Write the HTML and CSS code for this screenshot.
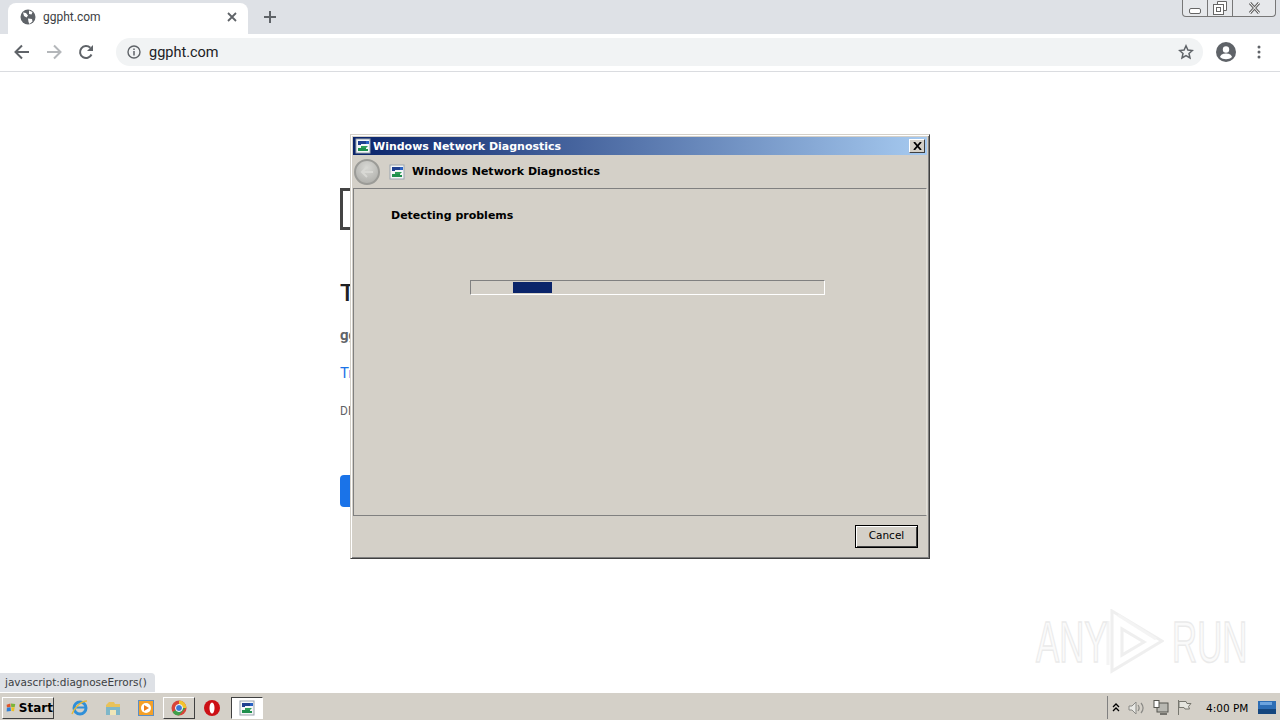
FILE: index.html
```html
<!DOCTYPE html>
<html lang="en">
<head>
<meta charset="UTF-8">
<meta name="viewport" content="width=device-width, initial-scale=1.0">
<title>ggpht.com</title>
<link rel="stylesheet" href="styles.css">
</head>
<body>

<svg class="defs" width="0" height="0">
  <symbol id="netdiag" viewBox="0 0 16 16">
    <rect x="1" y="1" width="14" height="14" fill="#f4f6f8" stroke="#9aa3ad"/>
    <path d="M3 3h10v3H6v1H3z" fill="#1f3f8f"/>
    <path d="M6 8h7l-2 2h-5z" fill="#2f9e58"/>
    <path d="M3 10h8v1l2 0v2H3z" fill="#1f8f4d"/>
    <rect x="11" y="3" width="3" height="3" fill="#2a62c4"/>
  </symbol>
</svg>

<div class="browser">
  <div class="tabstrip">
    <div class="tab">
      <svg class="tab-icon" width="16" height="16" viewBox="0 0 16 16">
        <circle cx="8" cy="8" r="7.5" fill="#5f6368"/>
        <path d="M3 3.5l3 .5 2 2.5-1.500 2-2.500-1.500zM9 1.500l3.500 1.500-1 2.500-2.500-.5zM8 9.500l4 .5.500 2.500-3 2.500-1-2z" fill="#fff"/>
      </svg>
      <span class="tab-title">ggpht.com</span>
      <svg class="tab-close" width="10" height="10" viewBox="0 0 10 10">
        <path d="M1 1l8 8M9 1l-8 8" stroke="#5f6368" stroke-width="1.800"/>
      </svg>
    </div>
    <svg class="new-tab" width="12" height="12" viewBox="0 0 12 12">
      <path d="M6 0v12M0 6h12" stroke="#5f6368" stroke-width="2"/>
    </svg>
    <div class="win-controls">
      <div class="win-btn min"><svg width="12" height="6" viewBox="0 0 12 6"><rect x="0.500" y="0.500" width="11" height="5" rx="1.500" fill="#fff" stroke="#666"/></svg></div>
      <div class="win-btn restore"><svg width="14" height="14" viewBox="0 0 14 14"><path d="M4.500 3V.5h9v9H11" fill="#fff" stroke="#666"/><rect x="0.500" y="3.500" width="10" height="10" fill="#fff" stroke="#666"/><rect x="3.500" y="6.500" width="4" height="4" fill="none" stroke="#666"/></svg></div>
      <div class="win-btn close"><svg width="13" height="12" viewBox="0 0 13 12"><path d="M2 1l9 10M11 1L2 11" stroke="#666" stroke-width="3"/><path d="M2 1l9 10M11 1L2 11" stroke="#fff" stroke-width="1"/></svg></div>
    </div>
  </div>

  <div class="toolbar">
    <svg class="nav-icon" width="16" height="16" viewBox="0 0 16 16"><path d="M15 8H2M8 1.500L1.500 8 8 14.500" fill="none" stroke="#5f6368" stroke-width="2"/></svg>
    <svg class="nav-icon" width="16" height="16" viewBox="0 0 16 16"><path d="M1 8h13M8 1.500L14.500 8 8 14.500" fill="none" stroke="#b4b7ba" stroke-width="2"/></svg>
    <svg class="nav-icon" width="16" height="16" viewBox="0 0 16 16"><path d="M13.500 10.500A6 6 0 1 1 12.300 3.800" fill="none" stroke="#5f6368" stroke-width="2"/><path d="M15 1v6H9z" fill="#5f6368"/></svg>
    <div class="omnibox">
      <svg class="info-icon" width="14" height="14" viewBox="0 0 14 14"><circle cx="7" cy="7" r="6" fill="none" stroke="#5f6368" stroke-width="1.400"/><path d="M7 6v4.500M7 3.500v1.500" stroke="#5f6368" stroke-width="1.500"/></svg>
      <span class="url">ggpht.com</span>
      <svg class="star" width="16" height="16" viewBox="0 0 16 16"><path d="M8 1.800l1.900 4.200 4.500.5-3.400 3 1 4.500L8 11.700 4 14l1-4.500-3.400-3 4.500-.5z" fill="none" stroke="#5f6368" stroke-width="1.500"/></svg>
    </div>
    <svg class="avatar" width="20" height="20" viewBox="0 0 20 20"><circle cx="10" cy="10" r="10" fill="#5f6368"/><circle cx="10" cy="7.500" r="3.200" fill="#fff"/><path d="M4 15c1-3 3.500-3.500 6-3.500s5 .5 6 3.500c-3 3-9 3-12 0z" fill="#fff"/></svg>
    <svg class="menu" width="4" height="14" viewBox="0 0 4 14"><circle cx="2" cy="2" r="1.500" fill="#5f6368"/><circle cx="2" cy="7" r="1.500" fill="#5f6368"/><circle cx="2" cy="12" r="1.500" fill="#5f6368"/></svg>
  </div>

  <div class="page">
    <div class="error-icon"></div>
    <h1 class="error-title">This site can't be reached</h1>
    <p class="error-host">ggpht.com's server IP address could not be found.</p>
    <a class="error-link" href="#">Try running Windows Network Diagnostics.</a>
    <div class="error-code">DNS_PROBE_FINISHED_NXDOMAIN</div>
    <div class="reload-btn">Reload</div>

    <div class="dialog">
      <div class="dialog-title">
        <svg width="16" height="16"><use href="#netdiag"/></svg>
        <span class="dialog-title-text">Windows Network Diagnostics</span>
        <div class="dialog-close">
          <svg width="9" height="8" viewBox="0 0 9 8"><path d="M1 0l7 8M8 0L1 8" stroke="#000" stroke-width="1.800"/></svg>
        </div>
      </div>
      <div class="dialog-head">
        <div class="back-btn">
          <svg width="14" height="12" viewBox="0 0 14 12"><path d="M13 6H3M7 1L2 6l5 5" fill="none" stroke="#d8d8d4" stroke-width="2"/></svg>
        </div>
        <svg width="16" height="16"><use href="#netdiag"/></svg>
        <span class="dialog-head-text">Windows Network Diagnostics</span>
      </div>
      <div class="dialog-panel">
        <div class="status">Detecting problems</div>
        <div class="progress"><div class="progress-chunk"></div></div>
      </div>
      <div class="dialog-foot">
        <div class="cancel-btn">Cancel</div>
      </div>
    </div>

    <div class="watermark">
      <span class="wm-text">ANY</span>
      <svg class="wm-logo" width="58" height="66" viewBox="0 0 58 66">
        <path d="M6 2v60l50-30zM16 20v26l22-13z" fill="none" stroke="#ececec" stroke-width="3"/>
        <path d="M2 12v44M12 6l38 24" fill="none" stroke="#f2f2f2" stroke-width="3"/>
      </svg>
      <span class="wm-text">RUN</span>
    </div>

    <div class="status-bubble">javascript:diagnoseErrors()</div>
  </div>

  <div class="taskbar">
    <div class="start-btn">
      <svg width="16" height="15" viewBox="0 0 16 15">
        <path d="M1 3l6-2 .5 5.500-6 1z" fill="#e0562a"/>
        <path d="M8 1l7 1-1 5-5.500-.5z" fill="#7cb53a"/>
        <path d="M1.500 8l6-1 .5 6-7 1z" fill="#2f7fd6"/>
        <path d="M8.500 7l5.500.5-1 6-4-.5z" fill="#f0c020"/>
      </svg>
      <span>Start</span>
    </div>
    <div class="quick">
      <svg width="18" height="18" viewBox="0 0 18 18"><circle cx="9" cy="9" r="6" fill="none" stroke="#2f8fd8" stroke-width="3"/><path d="M4 8.500h11" stroke="#2f8fd8" stroke-width="2"/><path d="M1 15C3 9 10 2 16 2" fill="none" stroke="#e6b93a" stroke-width="1.500"/></svg>
    </div>
    <div class="quick">
      <svg width="16" height="16" viewBox="0 0 16 16"><path d="M1 5l3-3h5l1 2h5v3H1z" fill="#e8c25a"/><rect x="1" y="7" width="14" height="8" fill="#7fb7c9"/><rect x="5" y="10" width="6" height="5" fill="#f0e6b8"/></svg>
    </div>
    <div class="quick">
      <svg width="16" height="16" viewBox="0 0 16 16"><rect x="0.500" y="0.500" width="15" height="15" fill="#f4a028" stroke="#5a8fc8"/><circle cx="8" cy="8" r="5" fill="#fff"/><path d="M6 5l5 3-5 3z" fill="#ee7f1a"/></svg>
    </div>
    <div class="quick quick-raised">
      <svg width="16" height="16" viewBox="0 0 16 16"><circle cx="8" cy="8" r="7.500" fill="#d8453a"/><path d="M8 8L1.500 12A7.500 7.500 0 0 0 8 15.500L14.500 8z" fill="#3fa04a"/><path d="M8 .5A7.500 7.500 0 0 1 15.500 8H8z" fill="#f3c32c"/><circle cx="8" cy="8" r="3.500" fill="#3b78d8" stroke="#fff"/></svg>
    </div>
    <div class="quick">
      <svg width="16" height="16" viewBox="0 0 16 16"><circle cx="8" cy="8" r="8" fill="#cc1016"/><ellipse cx="8" cy="8" rx="2.500" ry="5.500" fill="#fff"/></svg>
    </div>
    <div class="quick quick-active">
      <svg width="16" height="16"><use href="#netdiag"/></svg>
    </div>
    <div class="tray">
      <svg width="8" height="9" viewBox="0 0 8 9"><path d="M1 4l3-3 3 3M1 8l3-3 3 3" fill="none" stroke="#000" stroke-width="1.300"/></svg>
      <svg width="17" height="14" viewBox="0 0 17 14"><path d="M1 5h3l4-4v12L4 9H1z" fill="#e8e8e4" stroke="#8a8a86"/><path d="M10 4c1.500 2 1.500 4 0 6M13 2c2.500 3 2.500 7 0 10" fill="none" stroke="#8a8a86" stroke-width="1.200"/></svg>
      <svg width="16" height="15" viewBox="0 0 16 15"><rect x="4" y="3" width="11" height="9" fill="#b8b8b2" stroke="#55554f"/><rect x="1" y="0.500" width="5" height="7" fill="#fff" stroke="#55554f"/><path d="M7 14h7" stroke="#55554f" stroke-width="1.500"/></svg>
      <svg width="15" height="15" viewBox="0 0 15 15"><path d="M1.500 0v15" stroke="#77776f"/><path d="M2 1.500h7l1 2h4l-2.500 3 1 2.500H8l-1-1.500H2z" fill="#e6e6e0" stroke="#77776f"/></svg>
      <span class="clock">4:00 PM</span>
      <svg class="show-desktop" width="18" height="13" viewBox="0 0 18 13"><rect width="18" height="11" fill="#2c6db5"/><rect y="8" width="18" height="5" fill="#14467e"/><rect x="2" y="1" width="12" height="3" fill="#6ba3de"/></svg>
    </div>
  </div>
</div>

</body>
</html>
```

FILE: styles.css
```css
html, body {
  margin: 0;
  height: 100%;
  overflow: hidden;
  background: #fff;
}

.defs {
  position: absolute;
}

.browser {
  display: flex;
  flex-direction: column;
  height: 720px;
  font-family: Roboto, "Liberation Sans", sans-serif;
}

/* tab strip */
.tabstrip {
  display: flex;
  align-items: flex-end;
  height: 34px;
  padding-left: 8px;
  background: #dee1e6;
  position: relative;
  flex: none;
}

.tab {
  display: flex;
  align-items: center;
  box-sizing: border-box;
  width: 240px;
  height: 31px;
  padding: 0 11px 3px 12px;
  background: #fff;
  border-radius: 8px 8px 0 0;
}

.tab-title {
  flex: 1;
  margin-left: 7px;
  font-size: 12px;
  color: #3c4043;
}

.new-tab {
  margin: 0 0 11px 16px;
}

.win-controls {
  display: flex;
  position: absolute;
  top: 0;
  right: 4px;
  height: 16px;
  border: 1px solid #777;
  border-top: 0;
  border-radius: 0 0 4px 4px;
  background: #e6e8eb;
}

.win-btn {
  display: flex;
  align-items: center;
  justify-content: center;
  width: 24px;
  height: 16px;
  border-left: 1px solid #777;
}

.win-btn.min {
  border-left: 0;
}

.win-btn.min svg {
  margin-top: 5px;
}

.win-btn.close {
  width: 42px;
}

/* toolbar */
.toolbar {
  display: flex;
  align-items: center;
  box-sizing: border-box;
  height: 38px;
  padding: 0 19px 1px 14px;
  background: #fff;
  border-bottom: 1px solid #dadce0;
  flex: none;
}

.nav-icon {
  margin-right: 16px;
}

.omnibox {
  display: flex;
  align-items: center;
  flex: 1;
  height: 28px;
  margin: 0 13px 0 6px;
  padding: 0 9px 0 11px;
  background: #f1f3f4;
  border-radius: 14px;
}

.url {
  flex: 1;
  margin-left: 8px;
  font-size: 14.500px;
  color: #202124;
}

.avatar {
  margin-right: 21px;
}

/* error page behind the dialog */
.page {
  flex: 1;
  position: relative;
  box-sizing: border-box;
  padding: 116px 0 0 340px;
  background: #fff;
  overflow: hidden;
}

.error-icon {
  box-sizing: border-box;
  width: 48px;
  height: 42px;
  border: 3px solid #444;
}

.error-title {
  margin: 48px 0 0;
  font-size: 24px;
  line-height: 30px;
  font-weight: 500;
  color: #202124;
}

.error-host {
  margin: 17px 0 0;
  font-size: 15px;
  line-height: 20px;
  font-weight: 700;
  color: #5f6368;
}

.error-link {
  display: block;
  margin-top: 18px;
  font-size: 15px;
  line-height: 20px;
  color: #1a73e8;
  text-decoration: none;
}

.error-code {
  margin-top: 20px;
  font-size: 12px;
  line-height: 16px;
  color: #5f6368;
}

.reload-btn {
  box-sizing: border-box;
  width: 80px;
  height: 32px;
  margin-top: 56px;
  padding-top: 8px;
  text-align: center;
  font-size: 13px;
  color: #fff;
  background: #1a73e8;
  border-radius: 4px;
}

/* dialog window */
.dialog {
  display: flex;
  flex-direction: column;
  position: absolute;
  left: 350px;
  top: 62px;
  box-sizing: border-box;
  width: 580px;
  height: 425px;
  background: #d4d0c8;
  border: 1px solid;
  border-color: #d4d0c8 #404040 #404040 #d4d0c8;
  box-shadow: inset 1px 1px 0 #fff, inset -1px -1px 0 #808080;
  padding: 2px;
  font-family: "DejaVu Sans", sans-serif;
  color: #000;
}

.dialog-title {
  display: flex;
  align-items: center;
  flex: none;
  height: 18px;
  padding: 0 2px;
  background: linear-gradient(to right, #0a246a, #a6caf0);
}

.dialog-title-text {
  flex: 1;
  margin-left: 2px;
  font-size: 11px;
  font-weight: 700;
  color: #fff;
}

.dialog-close {
  display: flex;
  align-items: center;
  justify-content: center;
  box-sizing: border-box;
  width: 16px;
  height: 14px;
  background: #d4d0c8;
  border: 1px solid;
  border-color: #fff #404040 #404040 #fff;
}

.dialog-head {
  display: flex;
  align-items: center;
  flex: none;
  box-sizing: border-box;
  height: 33px;
  padding-left: 1px;
}

.back-btn {
  display: flex;
  align-items: center;
  justify-content: center;
  box-sizing: border-box;
  width: 26px;
  height: 26px;
  margin-right: 9px;
  border: 2px solid #9b9b97;
  border-radius: 50%;
  background: radial-gradient(circle at 50% 30%, #d8d8d4, #a9a9a5);
}

.dialog-head-text {
  margin-left: 7px;
  font-size: 11px;
  font-weight: 700;
}

.dialog-panel {
  flex: 1;
  box-sizing: border-box;
  padding: 20px 0 0 37px;
  border: 1px solid;
  border-color: #808080 #e4e2dc #808080 #808080;
}

.status {
  font-size: 11px;
  font-weight: 700;
  line-height: 13px;
}

.progress {
  box-sizing: border-box;
  width: 355px;
  height: 15px;
  margin: 58px 0 0 79px;
  padding-top: 1px;
  border: 1px solid;
  border-color: #808080 #fff #fff #808080;
}

.progress-chunk {
  width: 39px;
  height: 11px;
  margin-left: 42px;
  background: #0a246a;
}

.dialog-foot {
  display: flex;
  justify-content: flex-end;
  flex: none;
  box-sizing: border-box;
  height: 40px;
  padding: 9px 9px 0 0;
}

.cancel-btn {
  box-sizing: border-box;
  width: 63px;
  height: 23px;
  font-family: "DejaVu Sans", sans-serif;
  font-size: 10.500px;
  line-height: 19px;
  text-align: center;
  background: #d4d0c8;
  border: 1px solid #000;
  box-shadow: inset 1px 1px 0 #fff, inset -1px -1px 0 #404040;
}

/* watermark and status bubble float over the page */
.watermark {
  display: flex;
  align-items: center;
  position: absolute;
  left: 1036px;
  top: 536px;
  height: 68px;
  opacity: 0.8;
}

.wm-text {
  display: block;
  width: 70px;
  font-family: "Liberation Sans", sans-serif;
  font-size: 58px;
  line-height: 58px;
  color: #fafafa;
  -webkit-text-stroke: 1.500px #e6e6e6;
  transform: scaleX(0.6);
  transform-origin: left center;
}

.wm-logo {
  margin: 0 8px 0 0;
}

.status-bubble {
  position: absolute;
  left: 0;
  bottom: 0;
  box-sizing: border-box;
  height: 19px;
  padding: 2px 8px 0 5px;
  font-family: "DejaVu Sans", sans-serif;
  font-size: 10.500px;
  line-height: 15px;
  color: #3c4043;
  background: #dee1e6;
  border-radius: 0 4px 0 0;
}

/* windows taskbar */
.taskbar {
  display: flex;
  align-items: center;
  flex: none;
  box-sizing: border-box;
  height: 28px;
  padding: 2px 0 0 2px;
  background: #d4d0c8;
  border-top: 1px solid #fff;
  font-family: "DejaVu Sans", sans-serif;
}

.start-btn {
  display: flex;
  align-items: center;
  gap: 3px;
  box-sizing: border-box;
  width: 52px;
  height: 22px;
  padding-left: 3px;
  font-size: 12px;
  font-weight: 700;
  border: 1px solid;
  border-color: #fff #404040 #404040 #fff;
}

.quick {
  display: flex;
  align-items: center;
  justify-content: center;
  box-sizing: border-box;
  width: 32px;
  height: 22px;
  margin-left: 1px;
}

.quick:nth-child(2) {
  margin-left: 10px;
}

.quick-raised {
  border: 1px solid;
  border-color: #fff #404040 #404040 #fff;
}

.quick-active {
  margin-left: 3px;
  background: #fff;
  border: 1px solid;
  border-color: #404040 #fff #fff #404040;
}

.tray {
  display: flex;
  align-items: center;
  gap: 8px;
  box-sizing: border-box;
  height: 23px;
  margin-left: auto;
  padding: 0 3px 0 4px;
  width: 173px;
  border-left: 1px solid #808080;
}

.clock {
  margin: 0 2px 0 6px;
  font-size: 10.500px;
  white-space: nowrap;
}
```
